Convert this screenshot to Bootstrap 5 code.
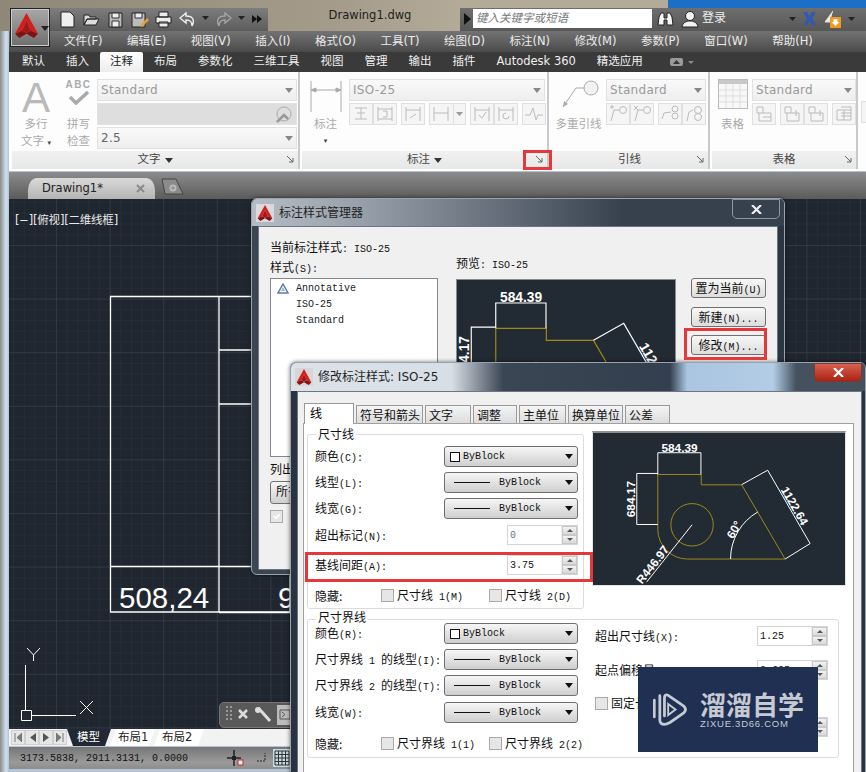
<!DOCTYPE html>
<html lang="zh-CN">
<head>
<meta charset="UTF-8">
<title>AutoCAD 标注样式</title>
<link href="https://cdn.jsdelivr.net/npm/bootstrap@5.3.0/dist/css/bootstrap.min.css" rel="stylesheet">
<style>
  html, body { margin: 0; height: 100%; }
  body {
    width: 866px; height: 772px; overflow: hidden; position: relative;
    background: linear-gradient(90deg, #8e8e88 0, #a9b4bf 3px, #d3e0ec 6px, #b4c4d4 9px);
    font-family: "DejaVu Sans", "Noto Sans CJK SC", sans-serif; font-size: 12px; color: #111;
  }
  .cad-app { margin-left: 9px; height: 768px; display: flex; flex-direction: column; }

  /* title bar */
  .cad-title { height: 31px; flex: none; padding-top: 8px; display: flex; background: linear-gradient(90deg, #8f8777 0, #a59c8b 40%, #b3aa98 53%); margin-left: -9px; }
  .cad-top-blue { position: absolute; top: 0; left: 668px; right: 0; height: 8px; background: #1c6fc6; }
  .cad-qat { margin-left: 50px; width: 218px; height: 23px; background: linear-gradient(#7d7d7d, #5c5c5c); display: flex; align-items: center; position: relative; }
  .cad-qat svg { position: absolute; top: 3px; }
  .cad-docname { width: 192px; text-align: center; font-size: 11.5px; color: #1d1d1d; padding-left: 12px; margin-top: -1px; }
  .cad-searchbar { flex: 1; height: 23px; background: linear-gradient(#6e6e6e, #575757); display: flex; align-items: center; position: relative; }
  .cad-searchbar svg { position: absolute; }
  .cad-search-input { position: absolute; left: 13px; top: 1px; width: 179px; height: 19px; background: #fff; color: #777; font-style: italic; font-size: 11.5px; line-height: 19px; padding-left: 3px; }
  .cad-login { position: absolute; left: 242px; top: 1px; color: #eee; font-size: 12px; }
  .cad-appbtn { position: absolute; left: 10px; top: 8px; width: 40px; height: 39px; border: 1px solid #222; background: linear-gradient(#a8a8a8, #6f6f6f); z-index: 3; box-shadow: inset 0 0 0 1px #c9c9c9; }

  .cad-menu { height: 21px; flex: none; background: linear-gradient(#737373, #4b4b4b); display: flex; align-items: center; padding-left: 55px; gap: 24.5px; color: #ececec; font-size: 11.5px; white-space: nowrap; }
  .cad-tabs { height: 20px; flex: none; background: #3a3a3a; display: flex; align-items: stretch; padding-left: 3px; color: #f0f0f0; font-size: 11.5px; white-space: nowrap; }
  .cad-tabs span { display: flex; align-items: center; padding: 0 10px; margin-right: 1px; }
  .cad-tabs .is-on { background: linear-gradient(#fff, #ececec); color: #222; border-radius: 2px 2px 0 0; padding: 0 10px; }

  /* ribbon */
  .cad-ribbon { height: 99px; flex: none; background: #fdfdfd; display: flex; color: #9c9c9c; border-bottom: 2px solid #fff; }
  .cad-panel { flex: none; display: flex; flex-direction: column; border-right: 2px solid #c9c9c9; margin-left: 2px; }
  .cad-panel-body { flex: 1; display: flex; padding-top: 7px; }
  .cad-panel-foot { height: 18px; flex: none; background: linear-gradient(#f1f1f1, #e7e7e7); display: flex; align-items: center; justify-content: center; color: #444; position: relative; font-size: 11.5px; }
  .cad-launch { position: absolute; right: 4px; top: 5px; }
  .cad-big { display: flex; flex-direction: column; align-items: center; text-align: center; line-height: 16.5px; font-size: 11.5px; color: #aaa; }
  .cad-cmbs { display: flex; flex-direction: column; gap: 2px; }
  .cad-cmb { height: 22px; border: 1px solid #e2e2e2; background: linear-gradient(#f9f9f9, #eee); display: flex; align-items: center; padding-left: 3px; position: relative; color: #9a9a9a; letter-spacing: .3px; }
  .cad-cmb::after { content: ""; position: absolute; right: 3px; top: 8px; border: 4.5px solid transparent; border-top: 5px solid #888; }
  .cad-cmb.is-plain::after { display: none; }
  .cad-cmb.is-grey { background: #dedede; }
  .cad-tiles { display: flex; height: 22px; }
  .cad-tile { width: 24px; height: 22px; border: 1px solid #e0e0e0; background: #f5f5f5; flex: none; }
  .cad-tile svg { display: block; width: 22px; height: 20px; }

  .cad-doctabs { height: 27px; flex: none; background: linear-gradient(#8c8c8c, #5b5b5b); margin-top: 1px; padding-top: 6px; padding-left: 19px; display: flex; }
  .cad-doctab { width: 127px; height: 21px; background: linear-gradient(#dadada, #b3b3b3); border-radius: 9px 9px 0 0 / 12px 12px 0 0; color: #222; font-size: 11.5px; display: flex; align-items: center; justify-content: space-between; padding: 0 10px 0 14px; }
  .cad-newtab { margin: 0 0 0 6px; }

  .cad-view { flex: 1; position: relative; background: #222934; }
  .cad-view svg { display: block; }
  .cad-layouts { height: 17px; flex: none; background: #f2f2f2; display: flex; align-items: center; font-size: 11.5px; padding-left: 2px; color: #222; }
  .cad-nav { width: 14px; height: 15px; background: #e6e6e6; border: 1px solid #cfcfcf; flex: none; display: flex; align-items: center; justify-content: center; }
  .cad-lay { height: 17px; width: 45px; padding-left: 8px; display: flex; align-items: center; clip-path: polygon(6px 0, 100% 0, calc(100% - 6px) 100%, 0 100%); background: #fff; margin-left: -1px; }
  .cad-lay.is-on { width: 44px; background: #222934; color: #fff; clip-path: polygon(0 0, 100% 0, calc(100% - 6px) 100%, 6px 100%); padding-left: 10px; margin-left: 0; }
  .cad-status { height: 22px; flex: none; background: linear-gradient(#767676, #9a9a9a 70%, #8c8c8c); display: flex; align-items: center; padding-left: 11px; font-family: "Liberation Mono", monospace; font-size: 10px; color: #111; margin-top: 1px; gap: 0; position: relative; }
  .cad-status svg { position: absolute; top: 2px; }

  .cad-cmdbar { position: absolute; left: 210px; top: 503px; width: 80px; height: 26px; border-radius: 5px; background: #595959; border: 1px solid #777; }

  /* dialogs sit on the drawing like windows */
  .cad-dlg { position: absolute; border-radius: 6px 6px 0 0; border: 1px solid #9aa3ad; box-shadow: 0 0 4px rgba(0,0,0,.55); }
  .cad-dlg-1 { left: 251px; top: 198px; width: 534px; height: 377px; background: linear-gradient(90deg, #3c4653, #2c3542); border-radius: 6px; z-index: 4; }
  .cad-dlg-2 { left: 290px; top: 362px; width: 576px; height: 420px; background: #2a3340; z-index: 5; }
  .cad-cap { height: 28px; display: flex; align-items: center; padding-left: 4px; gap: 5px; color: #1f1f1f; font-size: 12px; white-space: nowrap; }
  .cad-dlg-1 .cad-cap { background: linear-gradient(90deg, #b5bcc4 0, #98a1ab 20%, #37414e 70%); height: 27px; border-radius: 5px 5px 0 0; }
  .cad-dlg-2 .cad-cap { background: linear-gradient(90deg, #dce2e8 0, #d8dee5 28%, #3b4654 37%, #333f4e 66%, #aac5e0 69%, #b3cde6 84%, #46515f 88%); border-radius: 5px 5px 0 0; }
  .cad-x { position: absolute; top: 0; width: 48px; height: 20px; border-radius: 0 0 5px 5px; border: 1px solid #8c96a2; display: flex; align-items: center; justify-content: center; }
  .cad-client { background: #f0f0f0; margin: 0 6px; border: 1px solid #6c7580; position: relative; font-family: "Noto Sans CJK SC", sans-serif; font-size: 12px; white-space: nowrap; }
  .ltn { font-family: "Liberation Mono", monospace; font-size: 10px; }
  .cad-dlg-1 .cad-client { height: 344px; padding: 11px 11px; }
  .cad-dlg-2 .cad-client { height: 392px; margin-right: 3px; padding-top: 11px; padding-left: 5px; }

  .cad-list { width: 168px; height: 179px; margin-top: 1px; background: #fff; border: 1px solid #828790; padding: 2px 0 0 0; border-radius: 0; }
  .cad-list .list-group-item { border: 0; background: none; padding: 0 0 0 25px; height: 16px; line-height: 16px; font-family: "Liberation Mono", monospace; font-size: 10px; position: relative; }
  .cad-list svg { position: absolute; left: 6px; top: 2px; }
  .cad-prev-1 { width: 220px; height: 160px; background: #222a33; border: 1px solid #8a8a8a; border-bottom: 0; overflow: hidden; }
  .cad-btn { display: block; width: 75px; height: 20px; padding: 0; border: 1px solid #707070; border-radius: 3px; background: linear-gradient(#f7f7f7, #ddd); color: #111; font: inherit; font-size: 12px; line-height: 18px; margin-bottom: 8.5px; }
  .cad-red { position: absolute; border: 3px solid #e5383b; z-index: 6; pointer-events: none; }

  .cad-dlgtabs { border: 0; flex-wrap: nowrap; height: 20px; gap: 2px; align-items: flex-end; margin-left: 1px; }
  .cad-dlgtabs .nav-link { height: 18px; padding: 0 0 0 3px; border: 1px solid #9a9a9a; border-bottom: 0; border-radius: 0; color: #111; background: linear-gradient(#f4f4f4, #dcdcdc); font-size: 12px; line-height: 17px; text-align: left; margin: 0; }
  .cad-dlgtabs .nav-link.active { height: 21px; padding-left: 5px; background: #fff; border-color: #999; margin-bottom: -1px; position: relative; z-index: 2; }
  .cad-pane { background: #fff; border: 1px solid #a0a0a0; width: 551px; height: 365px; padding: 10px 3px 0 3px; }
  .cad-grp { border: 1px solid #dcdcdc; border-radius: 3px; position: relative; }
  .cad-legend { position: absolute; left: 8px; top: -8px; background: #fff; padding: 0 2px; line-height: 14px; font-size: 12px; }
  .cad-legend.is-up { top: -10px; }
  .cad-row { display: flex; align-items: center; position: relative; }
  .cad-lbl { width: 136px; flex: none; padding-left: 7px; }
  .cad-sel { width: 134px; height: 21px; border: 1px solid #707070; border-radius: 3px; background: linear-gradient(#f6f6f6, #cfcfcf); display: flex; align-items: center; font-family: "Liberation Mono", "Noto Sans CJK SC", monospace; font-size: 10px; position: relative; flex: none; }
  .cad-sel::after { content: ""; position: absolute; right: 4px; top: 7px; border: 4px solid transparent; border-top: 5px solid #111; }
  .cad-swatch { width: 10px; height: 10px; border: 1px solid #111; background: #fff; margin: 0 3px 0 5px; flex: none; }
  .cad-ln { width: 36px; border-top: 1px solid #111; margin: 0 9px; flex: none; }
  .cad-spin { width: 71px; height: 20px; border: 1px solid #d4d4d4; background: #fff; display: flex; align-items: center; justify-content: space-between; padding-left: 2px; font-family: "Liberation Mono", monospace; font-size: 10px; flex: none; }
  .cad-spin-btns { width: 16px; height: 100%; display: flex; flex-direction: column; border-left: 1px solid #eee; }
  .cad-spin-btns i { flex: 1; display: flex; align-items: center; justify-content: center; background: linear-gradient(#f3f3f3, #d9d9d9); border: 1px solid #c8c8c8; }
  .cad-spin-btns i::before { content: ""; border: 3px solid transparent; }
  .cad-spin-btns i:first-child::before { border-bottom: 3px solid #555; border-top: 0; }
  .cad-spin-btns i:last-child::before { border-top: 3px solid #555; border-bottom: 0; }
  .cad-chk.form-check-input { width: 13px; height: 13px; margin: 0 3px 0 0; border-radius: 0; border: 1px solid #aaa; background-color: #e6e6e6; flex: none; opacity: 1; }
  .cad-prev-2 { width: 254px; height: 155px; margin-top: -3px; background: #222a33; border: 1px solid #e4e4e4; border-top: 2px solid #8f8f8f; flex: none; }
  .cad-wm { position: absolute; left: 638px; top: 667px; width: 180px; height: 85px; background: #1f3052; z-index: 7; display: flex; align-items: center; color: #c6cad3; padding-left: 15px; gap: 13px; }
  .cad-wm-name { font-size: 26px; line-height: 27px; font-weight: 700; font-family: "Noto Sans CJK SC", sans-serif; white-space: nowrap; }
  .cad-wm-url { font-size: 9.5px; letter-spacing: .75px; font-family: "Liberation Sans", sans-serif; line-height: 13px; white-space: nowrap; }
</style>
</head>
<body>

<svg width="0" height="0" class="position-absolute">
  <defs>
    <symbol id="acad-logo" viewBox="0 0 24 24">
      <polygon points="12,0 1,20 8,17 12,7 16,17 23,20" fill="#d3201c"/>
      <polygon points="8,17 1,20 5,24 12,20 19,24 23,20 16,17 12,19" fill="#7e1312"/>
      <polygon points="12,7 16,17 12,19 8,17" fill="#a8161a"/>
    </symbol>
    <symbol id="dim-prev" viewBox="0 0 254 154">
      <g fill="none" stroke="#a08a1c" stroke-width="1">
        <path d="M65 42H109V52.500H150L194 127.700H95A30 30 0 0 1 65 98Z"/>
        <circle cx="99.700" cy="93" r="21.500"/>
      </g>
      <g fill="none" stroke="#fff" stroke-width="1">
        <path d="M65 42V20H108.700V42"/>
        <path d="M65 41H43.700V92.700H65"/>
        <path d="M150 52.300L176.300 37.700L219.300 112L194 127.700"/>
        <path d="M99.700 93L53.700 151"/>
        <path d="M138.700 127.700A55 55 0 0 1 166.300 80"/>
      </g>
      <g fill="#fff" font-family="Liberation Sans, sans-serif" font-size="12" font-weight="700" text-anchor="middle">
        <text x="87" y="19">584.39</text>
        <text transform="translate(42 67) rotate(-90)">684.17</text>
        <text transform="translate(200 76) rotate(60)">1122.64</text>
        <text transform="translate(63 136) rotate(-52)">R446.97</text>
        <text transform="translate(146 100) rotate(-60)">60°</text>
      </g>
    </symbol>
  </defs>
</svg>

<div class="cad-top-blue"></div>
<div class="cad-appbtn">
  <svg width="25" height="27" style="margin:3px 0 0 3px"><use href="#acad-logo"/></svg>
  <svg width="8" height="5" style="position:absolute;left:30px;top:17px"><path d="M0 0H8L4 5Z" fill="#222"/></svg>
</div>

<div class="cad-app">
  <div class="cad-title">
    <div class="cad-qat">
      <svg style="left:9px" width="17" height="17" viewBox="0 0 17 17"><path d="M2 1H11L15 5V16H2Z" fill="#eee" stroke="#222"/></svg>
      <svg style="left:33px" width="17" height="17" viewBox="0 0 17 17"><path d="M1 14V4H6L7 6H13V8H4L1 14L4 8H16L13 14Z" fill="#ddd" stroke="#222"/></svg>
      <svg style="left:58px" width="15" height="17" viewBox="0 0 15 17"><path d="M1 2H14V16H1Z" fill="#bbb" stroke="#222"/><path d="M4 2H11V7H4ZM4 10H11V16H4Z" fill="#eee" stroke="#333"/></svg>
      <svg style="left:81px" width="18" height="17" viewBox="0 0 18 17"><path d="M1 2H14V16H1Z" fill="#bbb" stroke="#222"/><path d="M4 2H11V7H4Z" fill="#eee" stroke="#333"/><path d="M9 15L16 7L18 9L11 16Z" fill="#e8a02c"/></svg>
      <svg style="left:105px" width="17" height="17" viewBox="0 0 17 17"><path d="M4 1H13V6H4ZM1 6H16V12H1ZM4 11H13V16H4Z" fill="#eee" stroke="#222"/></svg>
      <svg style="left:129px" width="17" height="17" viewBox="0 0 17 17"><path d="M7 2L1 7L7 12V9C11 9 13 10 13 15C16 9 14 5 7 5Z" fill="none" stroke="#f0f0f0" stroke-width="1.400"/></svg>
      <svg style="left:152px;top:8px" width="7" height="5"><path d="M0 0H7L3.500 4Z" fill="#222"/></svg>
      <svg style="left:165px" width="17" height="17" viewBox="0 0 17 17"><path d="M10 2L16 7L10 12V9C6 9 4 10 4 15C1 9 3 5 10 5Z" fill="none" stroke="#a5a5a5" stroke-width="1.400"/></svg>
      <svg style="left:188px;top:8px" width="7" height="5"><path d="M0 0H7L3.500 4Z" fill="#222"/></svg>
      <svg style="left:202px;top:7px" width="10" height="8"><path d="M0 0L5 4L0 8ZM5 0L10 4L5 8Z" fill="#111"/></svg>
    </div>
    <div class="cad-docname">Drawing1.dwg</div>
    <div class="cad-searchbar">
      <svg style="left:4px;top:5px" width="7" height="12"><path d="M0 0L7 6L0 12Z" fill="#111"/></svg>
      <div class="cad-search-input">键入关键字或短语</div>
      <svg style="left:197px;top:3px" width="17" height="17" viewBox="0 0 17 17"><path d="M2 6L4 2H7V7H10V2H13L15 6L16 14H10V9H7V14H1Z" fill="#f5f5f5" stroke="#222"/></svg>
      <svg style="left:221px;top:2px" width="18" height="18" viewBox="0 0 18 18"><circle cx="9" cy="6" r="4.500" fill="#f2f2f2" stroke="#222"/><path d="M1 17C2 12 5 12 7 11H11C13 12 16 12 17 17Z" fill="#f2f2f2" stroke="#222"/></svg>
      <span class="cad-login">登录</span>
      <svg style="left:329px;top:9px" width="7" height="4"><path d="M0 0H7L3.500 4Z" fill="#222"/></svg>
      <svg style="left:342px;top:3px" width="15" height="15" viewBox="0 0 15 15"><path d="M1 1H5L7.500 5L10 1H14L10 7.500L14 14H10L7.500 10L5 14H1L5 7.500Z" fill="#2f59b5"/></svg>
      <svg style="left:364px;top:2px" width="18" height="19" viewBox="0 0 18 19"><path d="M9 1L1 12H6" fill="#eee" stroke="#ddd"/><rect x="6" y="7" width="11" height="11" fill="#f09a1e"/><path d="M9.500 9H13.500V12H15.500L11.500 16L7.500 12H9.500Z" fill="#fff"/></svg>
      <svg style="left:388px;top:9px" width="7" height="4"><path d="M0 0H7L3.500 4Z" fill="#222"/></svg>
    </div>
  </div>

  <div class="cad-menu">
    <span>文件(F)</span><span>编辑(E)</span><span>视图(V)</span><span>插入(I)</span><span>格式(O)</span><span>工具(T)</span><span>绘图(D)</span><span>标注(N)</span><span>修改(M)</span><span>参数(P)</span><span>窗口(W)</span><span>帮助(H)</span>
  </div>

  <div class="cad-tabs">
    <span>默认</span><span>插入</span><span class="is-on">注释</span><span>布局</span><span>参数化</span><span>三维工具</span><span>视图</span><span>管理</span><span>输出</span><span>插件</span><span>Autodesk 360</span><span>精选应用</span>
    <svg class="ms-3 align-self-center" width="24" height="8" viewBox="0 0 24 8"><rect width="13" height="8" rx="2" fill="#9a9a9a"/><path d="M3 6L6.500 2L10 6Z" fill="#333"/><path d="M18 3H24L21 6Z" fill="#8a8a8a"/></svg>
  </div>

  <div class="cad-ribbon">
    <div class="cad-panel" style="width:288px;margin-left:3px">
      <div class="cad-panel-body">
        <div class="cad-big" style="width:48px">
          <div style="font:400 42px/38px 'Liberation Sans',sans-serif;color:#b9b9b9;height:38px;margin-bottom:-2px">A</div>
          <div style="margin-top:1px">多行<br>文字 <span style="font-size:7px;color:#444">▾</span></div>
        </div>
        <div class="cad-big" style="width:37px">
          <div style="font:700 10px/12px 'Liberation Sans',sans-serif;letter-spacing:1.500px;color:#aaa">ABC</div>
          <svg width="24" height="14" viewBox="0 0 24 14"><path d="M3 6L9 12L21 1" fill="none" stroke="#aaa" stroke-width="3.500"/></svg>
          <div style="margin-top:11px">拼写<br>检查</div>
        </div>
        <div class="cad-cmbs" style="width:200px">
          <div class="cad-cmb">Standard</div>
          <div class="cad-cmb is-grey is-plain"><svg class="position-absolute" style="right:2px;top:1px" width="20" height="18" viewBox="0 0 20 18"><circle cx="10" cy="9" r="7" fill="none" stroke="#aaa"/><path d="M3 17L10 10L14 14" stroke="#999" stroke-width="2.500" fill="none"/></svg></div>
          <div class="cad-cmb" style="color:#666">2.5</div>
        </div>
      </div>
      <div class="cad-panel-foot">文字 <svg class="ms-1" width="8" height="5"><path d="M0 0H8L4 5Z" fill="#333"/></svg>
        <svg class="cad-launch" width="7" height="7"><path d="M0 0L6 6M6 2V6H2" fill="none" stroke="#666"/></svg></div>
    </div>

    <div class="cad-panel" style="width:247px">
      <div class="cad-panel-body">
        <div class="cad-big" style="width:47px;padding-top:2px">
          <svg width="32" height="32" viewBox="0 0 32 32"><path d="M1 0V31M31 0V31M1 9H31M1 9L6 7V11ZM31 9L26 7V11Z" stroke="#aaa" fill="#aaa"/></svg>
          <div style="margin-top:3px">标注</div>
          <span style="font-size:7px;color:#444;line-height:10px;margin-top:3px">▾</span>
        </div>
        <div class="cad-cmbs" style="width:196px">
          <div class="cad-cmb">ISO-25</div>
          <div class="cad-tiles">
            <div class="cad-tile"><svg viewBox="0 0 22 20"><path d="M5 4H17M11 4V15M5 15H17M7 9H15" stroke="#bbb" fill="none"/></svg></div>
            <div class="cad-tile"><svg viewBox="0 0 22 20"><path d="M4 3V17M18 3V17M4 5H18M4 15H18M9 7H13V13H9" stroke="#bbb" fill="none"/></svg></div>
            <div class="cad-tile ms-1"><svg viewBox="0 0 22 20"><path d="M4 3V17M18 3V17M4 6H18M8 14L14 10" stroke="#bbb" fill="none"/></svg></div>
            <div class="cad-tile ms-1" style="border-right:0"><svg viewBox="0 0 22 20"><path d="M4 3V17M18 3V17M4 9H18" stroke="#bbb" fill="none"/></svg></div>
            <div class="cad-tile" style="width:13px"><svg style="width:11px" viewBox="0 0 11 20"><path d="M2 8H9L5.500 12Z" fill="#999"/></svg></div>
            <div class="cad-tile" style="margin-left:4px"><svg viewBox="0 0 22 20"><path d="M4 3V17M18 3V17M4 6H18M8 11L11 14L15 8" stroke="#bbb" fill="none"/></svg></div>
            <div class="cad-tile"><svg viewBox="0 0 22 20"><path d="M4 3V17M18 3V17M4 6H18M14 12A3 3 0 1 1 11 9" stroke="#bbb" fill="none"/></svg></div>
            <div class="cad-tile" style="margin-left:4px"><svg viewBox="0 0 22 20"><path d="M2 11H7L10 4L13 16L15 11H20" stroke="#bbb" fill="none"/></svg></div>
          </div>
        </div>
      </div>
      <div class="cad-panel-foot">标注 <svg class="ms-1" width="8" height="5"><path d="M0 0H8L4 5Z" fill="#333"/></svg>
        <svg class="cad-launch" width="7" height="7"><path d="M0 0L6 6M6 2V6H2" fill="none" stroke="#666"/></svg></div>
    </div>

    <div class="cad-panel" style="width:159px">
      <div class="cad-panel-body">
        <div class="cad-big" style="width:55px">
          <svg width="40" height="30" viewBox="0 0 40 30" style="margin-left:2px"><circle cx="31" cy="9" r="7" fill="#f2f2f2" stroke="#aaa"/><path d="M24 9H16L3 28" stroke="#aaa" fill="none"/><path d="M3 28L4 22L8 25Z" fill="#aaa"/></svg>
          <div style="margin-top:7px;white-space:nowrap">多重引线</div>
        </div>
        <div class="cad-cmbs" style="width:100px">
          <div class="cad-cmb">Standard</div>
          <div class="cad-tiles">
            <div class="cad-tile"><svg viewBox="0 0 22 20"><circle cx="16" cy="6" r="3.500" stroke="#bbb" fill="none"/><path d="M12 6H7L4 17M3 3H7M5 1V5" stroke="#bbb" fill="none"/></svg></div>
            <div class="cad-tile"><svg viewBox="0 0 22 20"><circle cx="16" cy="6" r="3.500" stroke="#bbb" fill="none"/><path d="M12 6H7L4 17M3 2L7 6M7 2L3 6" stroke="#bbb" fill="none"/></svg></div>
            <div class="cad-tile ms-1"><svg viewBox="0 0 22 20"><circle cx="16" cy="5" r="3" stroke="#bbb" fill="none"/><circle cx="16" cy="12" r="3" stroke="#bbb" fill="none"/><path d="M12 8L5 9L3 15" stroke="#bbb" fill="none"/></svg></div>
            <div class="cad-tile"><svg viewBox="0 0 22 20"><circle cx="15" cy="6" r="3.500" stroke="#bbb" fill="none"/><circle cx="15" cy="13" r="3.500" stroke="#bbb" fill="none"/><path d="M10 6L6 8L4 17" stroke="#bbb" fill="none"/></svg></div>
          </div>
        </div>
      </div>
      <div class="cad-panel-foot">引线
        <svg class="cad-launch" width="7" height="7"><path d="M0 0L6 6M6 2V6H2" fill="none" stroke="#666"/></svg></div>
    </div>

    <div class="cad-panel" style="width:146px">
      <div class="cad-panel-body">
        <div class="cad-big" style="width:41px;padding-left:1px">
          <svg width="30" height="30" viewBox="0 0 30 30"><rect x=".5" y=".5" width="29" height="29" fill="#f8f8f8" stroke="#bbb"/><rect x="1" y="1" width="28" height="4" fill="#c9c9c9"/><path d="M1 11H29M1 17H29M1 23H29M8 5V29M15 5V29M22 5V29" stroke="#ddd"/></svg>
          <div style="margin-top:7px">表格</div>
        </div>
        <div class="cad-cmbs" style="width:104px">
          <div class="cad-cmb">Standard</div>
          <div class="cad-tiles">
            <div class="cad-tile"><svg viewBox="0 0 22 20"><path d="M4 3H10V9H4ZM10 9H18V17H6V9M10 13H18" stroke="#bbb" fill="none"/></svg></div>
            <div class="cad-tile ms-1"><svg viewBox="0 0 22 20"><path d="M4 3H10V9H4ZM10 9H18V17H6V9M15 6V12" stroke="#bbb" fill="none"/></svg></div>
            <div class="cad-tile"><svg viewBox="0 0 22 20"><path d="M4 3H10V9H4ZM10 9H18V17H6V9M15 12V6" stroke="#bbb" fill="none"/></svg></div>
            <div class="cad-tile ms-1"><svg viewBox="0 0 22 20"><path d="M4 6H18V16H4ZM8 3H18V6M8 9H18M8 12H18M11 6V16" stroke="#bbb" fill="none"/></svg></div>
          </div>
        </div>
      </div>
      <div class="cad-panel-foot">表格
        <svg class="cad-launch" width="7" height="7"><path d="M0 0L6 6M6 2V6H2" fill="none" stroke="#666"/></svg></div>
    </div>
    <div class="cad-tile" style="margin:29px 0 0 3px;width:20px"></div>
  </div>

  <div class="cad-doctabs">
    <div class="cad-doctab"><span>Drawing1*</span><svg width="9" height="9" viewBox="0 0 9 9"><path d="M1 1L8 8M8 1L1 8" stroke="#8a8a8a" stroke-width="2"/></svg></div>
    <svg class="cad-newtab" width="23" height="17" viewBox="0 0 23 17"><path d="M1 1H15L22 16H4Z" fill="#8b8b8b" stroke="#444"/><circle cx="12" cy="10" r="3.500" fill="#bbb"/><path d="M12 8V12M10 10H14" stroke="#888"/></svg>
  </div>

  <div class="cad-view">
    <svg width="857" height="530" viewBox="9 198 857 530">
      <defs>
        <pattern id="g-minor" x="56" y="244" width="10.720" height="10.720" patternUnits="userSpaceOnUse"><path d="M0 0H10.720M0 0V10.720" stroke="#2a313c" fill="none"/></pattern>
        <pattern id="g-major" x="56" y="244" width="53.600" height="53.600" patternUnits="userSpaceOnUse"><path d="M0 0H53.600M0 0V53.600" stroke="#3b434f" fill="none"/></pattern>
      </defs>
      <rect x="9" y="198" width="857" height="530" fill="#20262f"/>
      <rect x="9" y="198" width="857" height="530" fill="url(#g-minor)"/>
      <rect x="9" y="198" width="857" height="530" fill="url(#g-major)"/>
      <g stroke="#fff" stroke-width="1.300" fill="none">
        <path d="M110.500 295.500H290V611H110.500Z"/>
        <path d="M219 295V611M219 349H290M219 403H290M110.500 565.500H290M219 611.500H290"/>
      </g>
      <g stroke="#fff" stroke-width="1" fill="none">
        <path d="M25.500 664V709M21.500 709.500H31.500V719.500H21.500ZM31 714.500H76"/>
        <path d="M27 647L33.500 654L40 647M33.500 654V660M80 700L93 713M93 700L80 713"/>
      </g>
      <text x="119" y="607" fill="#fff" font-family="Liberation Sans, sans-serif" font-size="29.500">508,24</text>
      <text x="278" y="607" fill="#fff" font-family="Liberation Sans, sans-serif" font-size="29.500">9</text>
    </svg>
    <div class="position-absolute text-white" style="left:6px;top:13px;font-size:11.5px;letter-spacing:-.2px;opacity:.9">[−][俯视][二维线框]</div>
    <div class="cad-cmdbar d-flex align-items-center">
      <svg width="70" height="20" viewBox="0 0 70 20" class="ms-1"><path d="M2 2H4M6 2H8M2 6H4M6 6H8M2 10H4M6 10H8M2 14H4M6 14H8" stroke="#999" stroke-width="2"/><path d="M15 5L23 13M23 5L15 13" stroke="#ddd" stroke-width="2.500"/><path d="M34 3L38 7L46 16" stroke="#ddd" stroke-width="3" fill="none"/><circle cx="34" cy="5" r="3" fill="#ddd"/><rect x="53" y="0" width="16" height="20" fill="#bcbcbc"/><path d="M56 5H66V14H56ZM58 7L61 9.500L58 12" fill="none" stroke="#555"/></svg>
    </div>
  </div>

  <div class="cad-layouts">
    <div class="cad-nav"><svg width="8" height="9"><path d="M1 0V9M8 0L3 4.500L8 9Z" stroke="#777" fill="#777"/></svg></div>
    <div class="cad-nav"><svg width="7" height="9"><path d="M7 0L1 4.500L7 9Z" fill="#555"/></svg></div>
    <div class="cad-nav"><svg width="7" height="9"><path d="M0 0L6 4.500L0 9Z" fill="#555"/></svg></div>
    <div class="cad-nav"><svg width="8" height="9"><path d="M7 0V9M0 0L5 4.500L0 9Z" stroke="#777" fill="#777"/></svg></div>
    <div class="cad-lay is-on">模型</div><div class="cad-lay">布局1</div><div class="cad-lay" style="width:50px">布局2</div>
  </div>

  <div class="cad-status">3173.5838, 2911.3131, 0.0000
    <svg style="left:216px" width="66" height="18" viewBox="0 0 66 18"><path d="M9 1V17M2 9H16" stroke="#222" stroke-width="1.500"/><rect x="7" y="7" width="4" height="4" fill="#222"/><rect x="13" y="11" width="5" height="5" fill="#e9e9e9" stroke="#b33"/><path d="M32 12H40V4" stroke="#222" stroke-dasharray="2 1" fill="none"/><rect x="48" y="0" width="18" height="18" fill="#c4dbe4"/><path d="M50 2H64V16H50ZM50 5.500H64M50 9H64M50 12.500H64M53.500 2V16M57 2V16M60.500 2V16" stroke="#333" fill="none"/></svg>
  </div>
</div>

<!-- 标注样式管理器 -->
<div class="cad-dlg cad-dlg-1">
  <div class="cad-cap"><svg width="18" height="18"><rect width="18" height="18" fill="#e8e8e8" opacity=".7"/><use href="#acad-logo" x="1" y="1" width="16" height="16"/></svg><span>标注样式管理器</span></div>
  <div class="cad-x" style="right:4px"><svg width="11" height="9" viewBox="0 0 11 9"><path d="M1 0L10 9M10 0L1 9" stroke="#eee" stroke-width="2.200"/></svg></div>
  <div class="cad-client">
    <div>当前标注样式<span class="ltn">: ISO-25</span></div>
    <div class="d-flex" style="margin-top:2px">
      <div style="width:187px">
        <div style="line-height:15px">样式<span class="ltn">(S):</span></div>
        <ul class="list-group cad-list">
          <li class="list-group-item"><svg width="12" height="12" viewBox="0 0 12 12"><path d="M6 1L11 10H1Z" fill="none" stroke="#5d7fa6" stroke-width="1.500"/><path d="M6 4L4 8H8Z" fill="#9db6d0"/></svg>Annotative</li>
          <li class="list-group-item">ISO-25</li>
          <li class="list-group-item">Standard</li>
        </ul>
        <div style="margin-top:5px;line-height:14px">列出</div>
        <div class="cad-sel" style="width:100%;height:23px;margin-top:5px;font-size:12px;padding-left:5px">所有</div>
        <div class="d-flex align-items-center" style="margin-top:6px"><input type="checkbox" class="form-check-input cad-chk" checked disabled></div>
      </div>
      <div style="margin-top:-3px">
        <div style="line-height:14px">预览<span class="ltn">: ISO-25</span></div>
        <div class="cad-prev-1" style="margin-top:6px"><svg width="254" height="154" viewBox="0 0 254 154" style="display:block;transform-origin:0 0;transform:translate(-36px,0) scale(1.150)"><use href="#dim-prev"/></svg></div>
      </div>
      <div style="margin:19px 0 0 15px">
        <button type="button" class="cad-btn">置为当前<span class="ltn">(U)</span></button>
        <button type="button" class="cad-btn">新建<span class="ltn">(N)...</span></button>
        <button type="button" class="cad-btn">修改<span class="ltn">(M)...</span></button>
      </div>
    </div>
  </div>
</div>
<div class="cad-red" style="left:684px;top:328px;width:83px;height:32px"></div>
<div class="cad-red" style="left:523px;top:150px;width:29px;height:20px"></div>

<!-- 修改标注样式 -->
<div class="cad-dlg cad-dlg-2">
  <div class="cad-cap"><svg width="18" height="18"><rect width="18" height="18" fill="#d6d6d6"/><use href="#acad-logo" x="1" y="1" width="16" height="16"/></svg><span>修改标注样式: ISO-25</span></div>
  <div class="cad-x" style="right:3px;height:19px;background:linear-gradient(#d9614f,#a92313);border-color:#7a3a36"><svg width="11" height="9" viewBox="0 0 11 9"><path d="M1 0L10 9M10 0L1 9" stroke="#fff" stroke-width="2.200"/></svg></div>
  <div class="cad-client">
    <ul class="nav nav-tabs cad-dlgtabs">
      <li class="nav-item"><a class="nav-link active" style="width:50px" href="#">线</a></li>
      <li class="nav-item"><a class="nav-link" style="width:67px" href="#">符号和箭头</a></li>
      <li class="nav-item"><a class="nav-link" style="width:46px" href="#">文字</a></li>
      <li class="nav-item"><a class="nav-link" style="width:44px" href="#">调整</a></li>
      <li class="nav-item"><a class="nav-link" style="width:47px" href="#">主单位</a></li>
      <li class="nav-item"><a class="nav-link" style="width:55px" href="#">换算单位</a></li>
      <li class="nav-item"><a class="nav-link" style="width:45px" href="#">公差</a></li>
    </ul>
    <div class="cad-pane">
      <div class="d-flex gap-2">
        <div class="cad-grp" style="width:277px;height:175px;padding-top:11px;flex:none">
          <span class="cad-legend">尺寸线</span>
          <div class="cad-row" style="height:21px"><span class="cad-lbl">颜色<span class="ltn">(C):</span></span><div class="cad-sel"><i class="cad-swatch"></i>ByBlock</div></div>
          <div class="cad-row" style="height:21px;margin-top:5px"><span class="cad-lbl">线型<span class="ltn">(L):</span></span><div class="cad-sel"><i class="cad-ln"></i>ByBlock</div></div>
          <div class="cad-row" style="height:21px;margin-top:5px"><span class="cad-lbl">线宽<span class="ltn">(G):</span></span><div class="cad-sel"><i class="cad-ln"></i>ByBlock</div></div>
          <div class="cad-row" style="height:20px;margin-top:6px"><span class="cad-lbl" style="width:199px">超出标记<span class="ltn">(N):</span></span><div class="cad-spin text-secondary">0<span class="cad-spin-btns"><i></i><i></i></span></div></div>
          <div class="cad-row" style="height:20px;margin-top:10px"><span class="cad-lbl" style="width:199px">基线间距<span class="ltn">(A):</span></span><div class="cad-spin">3.75<span class="cad-spin-btns"><i></i><i></i></span></div></div>
          <div class="cad-row" style="margin-top:11px"><span class="cad-lbl" style="width:73px">隐藏:</span><input type="checkbox" class="form-check-input cad-chk"><span style="width:92px">尺寸线<span class="ltn"> 1(M)</span></span><input type="checkbox" class="form-check-input cad-chk"><span>尺寸线<span class="ltn"> 2(D)</span></span></div>
        </div>
        <div class="cad-prev-2"><svg width="252" height="152" viewBox="0 0 252 152" style="display:block"><use href="#dim-prev"/></svg></div>
      </div>
      <div class="cad-grp" style="width:532px;height:139px;margin-top:10px;padding-top:3px;position:relative">
        <span class="cad-legend is-up">尺寸界线</span>
        <div class="d-flex">
          <div style="width:285px;flex:none">
            <div class="cad-row" style="height:21px"><span class="cad-lbl">颜色<span class="ltn">(R):</span></span><div class="cad-sel"><i class="cad-swatch"></i>ByBlock</div></div>
            <div class="cad-row" style="height:21px;margin-top:5px"><span class="cad-lbl">尺寸界线<span class="ltn"> 1 </span>的线型<span class="ltn">(I):</span></span><div class="cad-sel"><i class="cad-ln"></i>ByBlock</div></div>
            <div class="cad-row" style="height:21px;margin-top:5px"><span class="cad-lbl">尺寸界线<span class="ltn"> 2 </span>的线型<span class="ltn">(T):</span></span><div class="cad-sel"><i class="cad-ln"></i>ByBlock</div></div>
            <div class="cad-row" style="height:21px;margin-top:6px"><span class="cad-lbl">线宽<span class="ltn">(W):</span></span><div class="cad-sel"><i class="cad-ln"></i>ByBlock</div></div>
            <div class="cad-row" style="margin-top:11px"><span class="cad-lbl" style="width:73px">隐藏:</span><input type="checkbox" class="form-check-input cad-chk"><span style="width:92px">尺寸界线<span class="ltn"> 1(1)</span></span><input type="checkbox" class="form-check-input cad-chk"><span>尺寸界线<span class="ltn"> 2(2)</span></span></div>
          </div>
          <div style="padding-left:2px;flex:1">
            <div class="cad-row" style="height:20px;margin-top:3px"><span style="width:162px">超出尺寸线<span class="ltn">(X):</span></span><div class="cad-spin">1.25<span class="cad-spin-btns"><i></i><i></i></span></div></div>
            <div class="cad-row" style="height:20px;margin-top:14px"><span style="width:162px">起点偏移量<span class="ltn">(F):</span></span><div class="cad-spin">0.625<span class="cad-spin-btns"><i></i><i></i></span></div></div>
            <div class="cad-row" style="margin-top:16px;height:14px"><input type="checkbox" class="form-check-input cad-chk"><span>固定长度</span></div>
            <div class="cad-row" style="height:20px;margin-top:7px;padding-left:162px"><div class="cad-spin"><span></span><span class="cad-spin-btns"><i></i><i></i></span></div></div>
          </div>
        </div>
      </div>
    </div>
  </div>
</div>
<div class="cad-red" style="left:305px;top:552px;width:288px;height:30px"></div>

<div class="cad-wm">
  <svg width="34" height="37" viewBox="0 0 36 40" class="flex-none"><path d="M7 5V31C7 34 9 36 12 36C14 36 16 35 18 34L31 25C36 22 36 18 31 15L18 6C14 3 12 4 12 8V27" fill="none" stroke="#c6cad3" stroke-width="3" stroke-linecap="round"/><path d="M16 14L24 20L16 26Z" fill="none" stroke="#c6cad3" stroke-width="2"/><path d="M1 10V28" stroke="#c6cad3" stroke-width="3" stroke-linecap="round"/></svg>
  <div>
    <div class="cad-wm-name">溜溜自学</div>
    <div class="cad-wm-url">ZIXUE.3D66.COM</div>
  </div>
</div>

<script src="https://cdn.jsdelivr.net/npm/bootstrap@5.3.0/dist/js/bootstrap.bundle.min.js"></script>
</body>
</html>
